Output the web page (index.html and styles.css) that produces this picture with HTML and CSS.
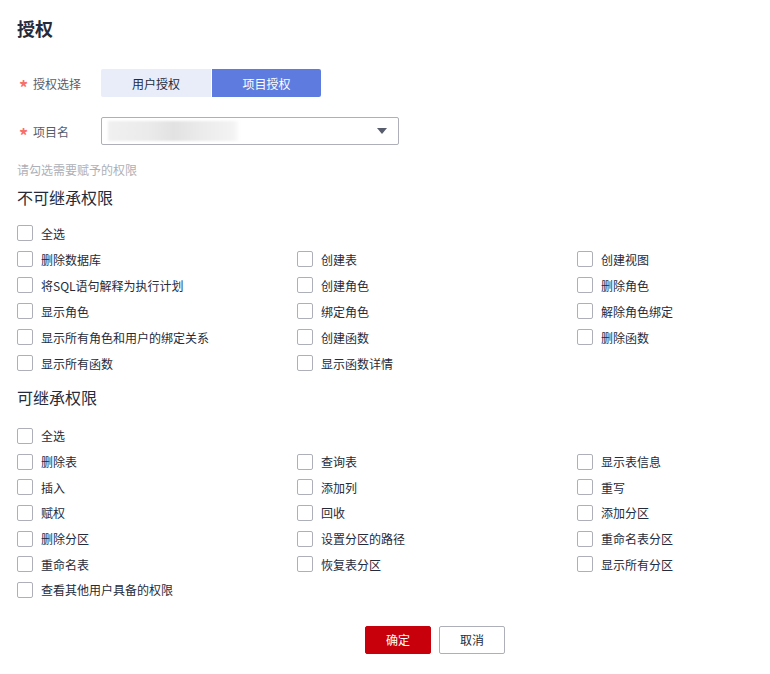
FILE: index.html
```html
<!DOCTYPE html>
<html lang="zh">
<head>
<meta charset="utf-8">
<link rel="stylesheet" href="styles.css">
</head>
<body>
<div class="page">
  <h1 class="title">授权</h1>
  <div class="form-row row-auth">
    <label class="label"><span class="star">*</span>授权选择</label>
    <div class="seg">
      <button class="seg-btn">用户授权</button>
      <button class="seg-btn active">项目授权</button>
    </div>
  </div>
  <div class="form-row row-proj">
    <label class="label"><span class="star">*</span>项目名</label>
    <div class="select">
      <div class="blur"></div>
      <span class="caret"></span>
    </div>
  </div>
  <div class="hint">请勾选需要赋予的权限</div>

  <div class="section-title">不可继承权限</div>
  <div class="grid">
    <label class="cb full"><span class="box"></span>全选</label>
    <label class="cb"><span class="box"></span>删除数据库</label>
    <label class="cb"><span class="box"></span>创建表</label>
    <label class="cb"><span class="box"></span>创建视图</label>
    <label class="cb"><span class="box"></span>将SQL语句解释为执行计划</label>
    <label class="cb"><span class="box"></span>创建角色</label>
    <label class="cb"><span class="box"></span>删除角色</label>
    <label class="cb"><span class="box"></span>显示角色</label>
    <label class="cb"><span class="box"></span>绑定角色</label>
    <label class="cb"><span class="box"></span>解除角色绑定</label>
    <label class="cb"><span class="box"></span>显示所有角色和用户的绑定关系</label>
    <label class="cb"><span class="box"></span>创建函数</label>
    <label class="cb"><span class="box"></span>删除函数</label>
    <label class="cb"><span class="box"></span>显示所有函数</label>
    <label class="cb"><span class="box"></span>显示函数详情</label>
  </div>

  <div class="section-title second">可继承权限</div>
  <div class="grid grid-2">
    <label class="cb full"><span class="box"></span>全选</label>
    <label class="cb"><span class="box"></span>删除表</label>
    <label class="cb"><span class="box"></span>查询表</label>
    <label class="cb"><span class="box"></span>显示表信息</label>
    <label class="cb"><span class="box"></span>插入</label>
    <label class="cb"><span class="box"></span>添加列</label>
    <label class="cb"><span class="box"></span>重写</label>
    <label class="cb"><span class="box"></span>赋权</label>
    <label class="cb"><span class="box"></span>回收</label>
    <label class="cb"><span class="box"></span>添加分区</label>
    <label class="cb"><span class="box"></span>删除分区</label>
    <label class="cb"><span class="box"></span>设置分区的路径</label>
    <label class="cb"><span class="box"></span>重命名表分区</label>
    <label class="cb"><span class="box"></span>重命名表</label>
    <label class="cb"><span class="box"></span>恢复表分区</label>
    <label class="cb"><span class="box"></span>显示所有分区</label>
    <label class="cb"><span class="box"></span>查看其他用户具备的权限</label>
  </div>

  <div class="actions">
    <button class="btn primary">确定</button>
    <button class="btn">取消</button>
  </div>
</div>
</body>
</html>
```
FILE: styles.css
```css
* { box-sizing: border-box; }
html, body { margin: 0; padding: 0; background: #fff; }
body {
  font-family: "Noto Sans CJK SC", "Noto Sans", sans-serif;
  color: #252b3a;
  font-size: 12px;
}
.page { padding: 16px 17px 0 17px; width: 770px; }
.title {
  margin: 0;
  font-size: 18px;
  line-height: 24px;
  font-weight: 700;
  color: #252b3a;
}
.form-row {
  display: flex;
  align-items: center;
  height: 28px;
}
.row-auth { margin-top: 29px; }
.row-proj { margin-top: 20px; }
.label {
  width: 84px;
  font-size: 12px;
  color: #575d6c;
  display: flex;
  align-items: center;
}
.star {
  color: #f66f6a;
  font-size: 18px;
  font-weight: 700;
  width: 16px;
  padding-left: 2px;
  line-height: 12px;
  position: relative;
  top: 4px;
}
.seg { display: flex; height: 28px; }
.seg-btn {
  border: none;
  font-family: inherit;
  font-size: 12px;
  height: 28px;
  background: #e9edfa;
  color: #252b3a;
  padding: 0;
  width: 110px;
  border-radius: 2px 0 0 2px;
}
.seg-btn.active {
  background: #5e7ce0;
  color: #fff;
  width: 109px;
  margin-left: 1px;
  border-radius: 0 2px 2px 0;
}
.select {
  width: 298px;
  height: 28px;
  border: 1px solid #adb0b8;
  border-radius: 2px;
  display: flex;
  align-items: center;
  justify-content: space-between;
  padding: 0 11px 0 6px;
}
.blur {
  width: 132px;
  height: 20px;
  background: linear-gradient(90deg, #f0f0f0 0%, #ebebeb 30%, #e2e2e2 50%, #ebebeb 70%, #f3f3f3 95%, #fff 100%);
  filter: blur(1px);
}
.caret {
  width: 0; height: 0;
  border-left: 5px solid transparent;
  border-right: 5px solid transparent;
  border-top: 6px solid #575d6c;
}
.hint {
  margin-top: 17px;
  color: #adb0b8;
  font-size: 12px;
  line-height: 16px;
}
.section-title {
  margin-top: 8px;
  font-size: 16px;
  line-height: 22px;
  color: #252b3a;
}
.section-title.second { margin-top: 10px; }
.grid {
  margin-top: 12px;
  display: grid;
  grid-template-columns: 280px 280px 1fr;
  grid-auto-rows: 26px;
}
.grid-2 { margin-top: 15px; grid-auto-rows: 25.7px; }
.cb {
  display: flex;
  align-items: center;
  font-size: 12px;
  color: #252b3a;
  white-space: nowrap;
}
.cb.full { grid-column: 1 / -1; }
.box {
  width: 16px;
  height: 16px;
  border: 1px solid #adb0b8;
  border-radius: 2px;
  margin-right: 8px;
  flex: none;
}
.actions {
  display: flex;
  gap: 8px;
  margin-top: 23px;
  padding-left: 348px;
}
.btn {
  width: 66px;
  height: 28px;
  font-family: inherit;
  font-size: 12px;
  border: 1px solid #adb0b8;
  background: #fff;
  color: #252b3a;
  border-radius: 2px;
  padding: 0;
}
.btn.primary {
  background: #c7000b;
  border-color: #c7000b;
  color: #fff;
}
```
